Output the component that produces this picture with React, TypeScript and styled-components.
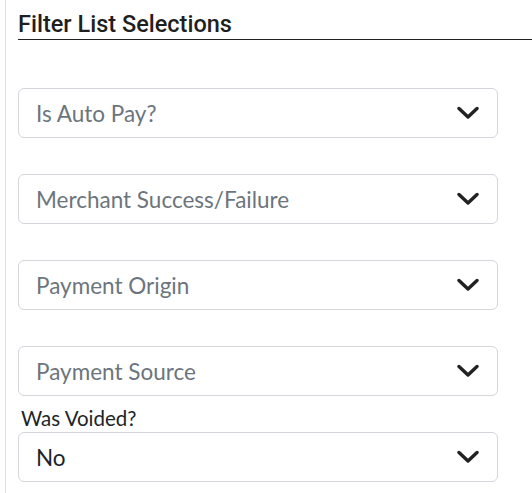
import styled, { createGlobalStyle } from 'styled-components';

const GlobalStyle = createGlobalStyle`
  body {
    margin: 0;
    background: #ffffff;
  }
`;

const Page = styled.div`
  padding-left: 5px;
  height: 493px;
  overflow: hidden;
`;

const Panel = styled.section`
  border-left: 1px solid #dcdfe3;
  padding: 9px 0 0 12px;
  min-height: 493px;
  box-sizing: border-box;
`;

const Title = styled.h2`
  margin: 0;
  font-family: Roboto, 'Liberation Sans', sans-serif;
  font-weight: 500;
  font-size: 23.5px;
  line-height: 30px;
  color: #1f1f1f;
  border-bottom: 1px solid #222;
`;

const Fields = styled.div`
  display: flex;
  flex-direction: column;
  gap: 36px;
  margin-top: 48px;
  width: 480px;
`;

const Field = styled.div`
  display: flex;
  flex-direction: column;
`;

const Label = styled.label`
  font-family: 'Source Sans Pro', Lato, 'Open Sans', sans-serif;
  font-size: 20.5px;
  line-height: 24px;
  color: #212529;
  padding-left: 3px;
  margin: -26px 0 2px;
`;

const Select = styled.div<{ $placeholder?: boolean }>`
  display: flex;
  align-items: center;
  justify-content: space-between;
  height: 50px;
  box-sizing: border-box;
  padding: 0 18px 0 17px;
  border: 1px solid #d3d6da;
  border-radius: 6px;
  font-family: 'Source Sans Pro', Lato, 'Open Sans', sans-serif;
  font-size: 22.5px;
  color: ${(p) => (p.$placeholder ? '#6c757d' : '#212529')};
`;

const Chevron = () => (
  <svg width="22" height="14" viewBox="0 0 22 14" aria-hidden="true">
    <path d="M2 2.5 L11 11 L20 2.5" fill="none" stroke="#222" strokeWidth="3.4" strokeLinecap="round" strokeLinejoin="round" />
  </svg>
);

const filters = ['Is Auto Pay?', 'Merchant Success/Failure', 'Payment Origin', 'Payment Source'];

export default function App() {
  return (
    <>
      <GlobalStyle />
      <Page>
        <Panel>
          <Title>Filter List Selections</Title>
          <Fields>
            {filters.map((f) => (
              <Select key={f} $placeholder>
                <span>{f}</span>
                <Chevron />
              </Select>
            ))}
            <Field>
              <Label>Was Voided?</Label>
              <Select>
                <span>No</span>
                <Chevron />
              </Select>
            </Field>
          </Fields>
        </Panel>
      </Page>
    </>
  );
}
